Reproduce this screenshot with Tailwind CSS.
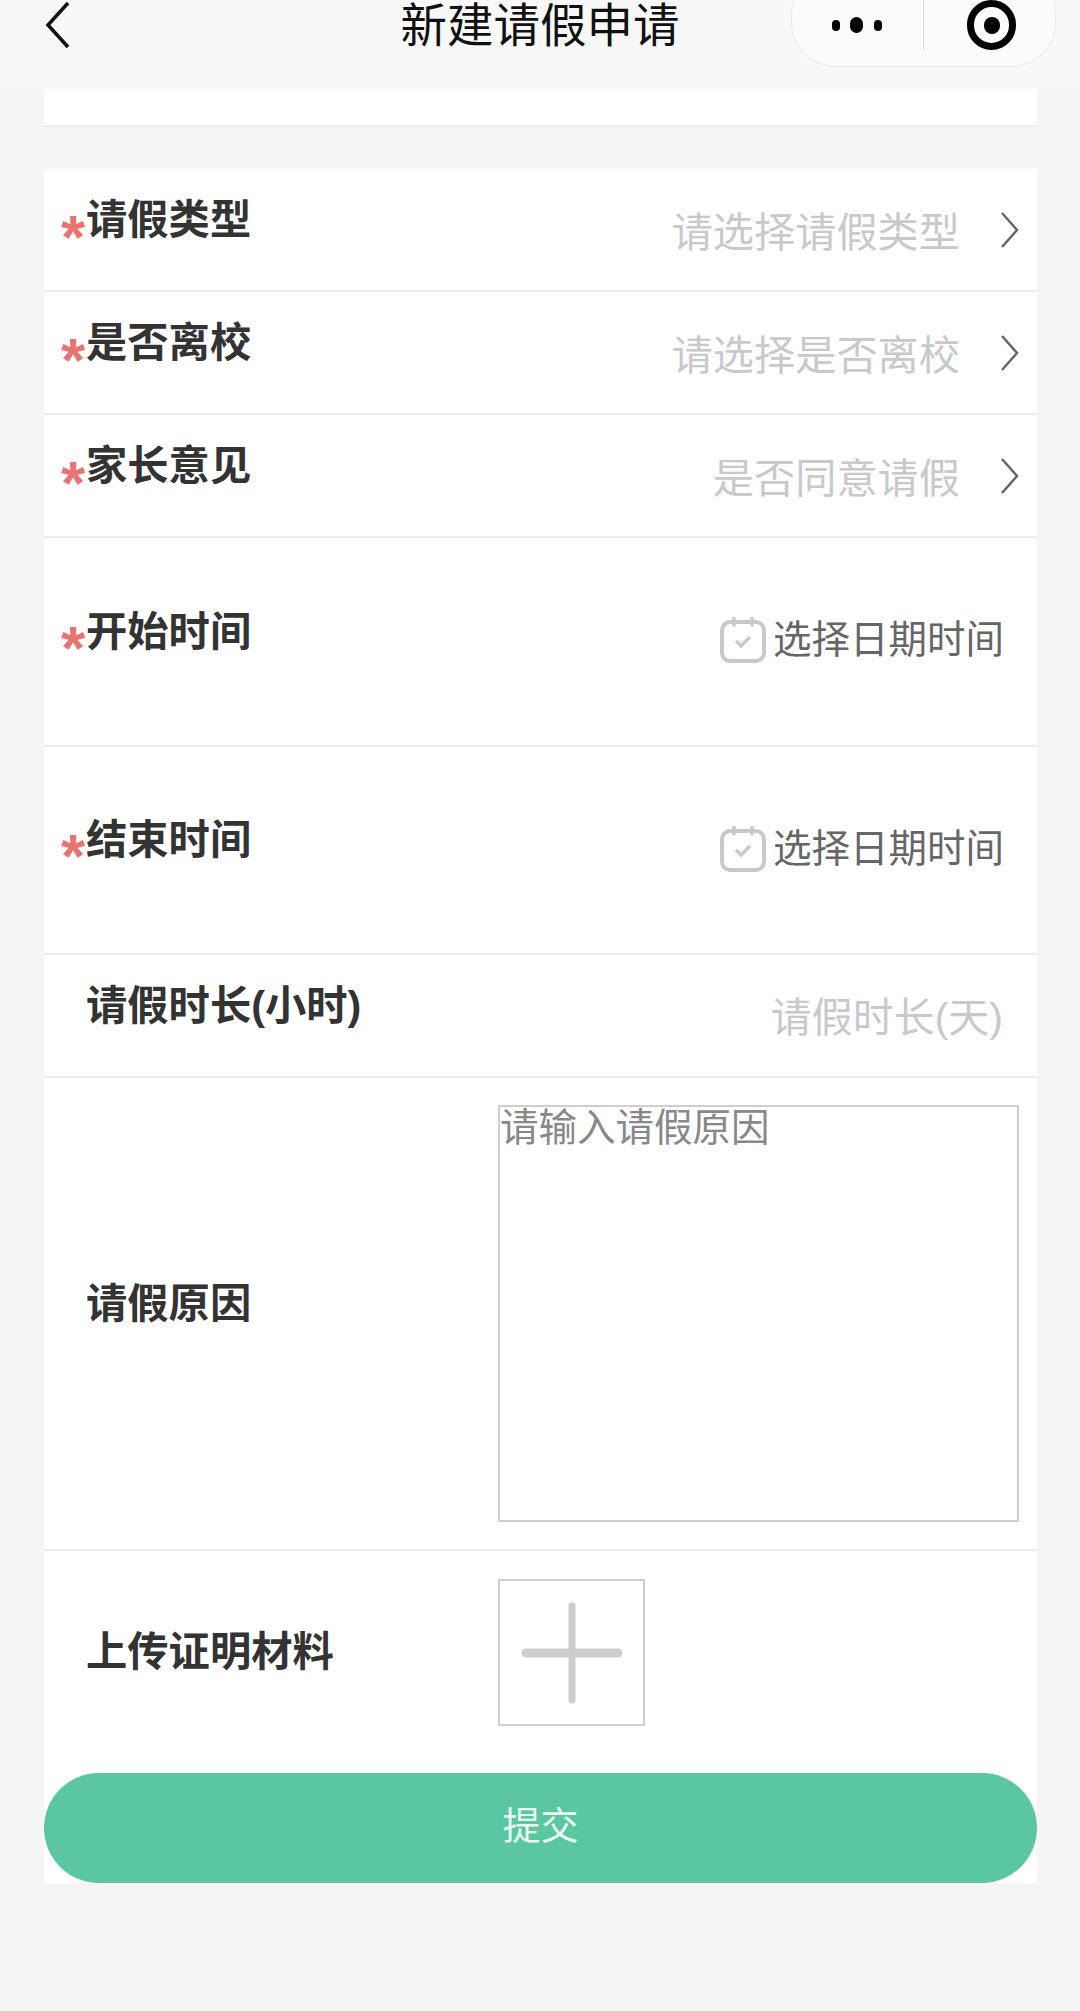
<!DOCTYPE html>
<html lang="zh">
<head>
<meta charset="utf-8">
<script src="https://cdn.jsdelivr.net/npm/@tailwindcss/browser@4"></script>
</head>
<body class="m-0 bg-[#f5f5f5] font-['Liberation_Sans','Noto_Sans_CJK_SC',sans-serif]">
<div class="w-[1080px] h-[2011px] overflow-hidden flex flex-col">
  <header class="relative h-[89px] shrink-0 bg-[#f8f8f8] flex items-start justify-center">
    <svg class="absolute left-[44px] top-[1px]" width="28" height="48" viewBox="0 0 28 48" fill="none"><path d="M24 2 L4 24 L24 46" stroke="#111" stroke-width="3.5"/></svg>
    <div class="text-[46.5px] leading-[50px] text-[#111] mt-[1px]">新建请假申请</div>
    <div class="absolute left-[791px] top-[-30px] w-[265px] h-[97px] rounded-[44px] border border-[#e9e9e9] bg-[#fbfbfb]">
      <span class="absolute left-[40px] top-[49px] w-[8px] h-[11px] rounded-full bg-black"></span>
      <span class="absolute left-[58px] top-[46px] w-[13px] h-[16px] rounded-full bg-black"></span>
      <span class="absolute left-[82px] top-[49px] w-[8px] h-[11px] rounded-full bg-black"></span>
      <span class="absolute left-[131px] top-[29px] w-px h-[50px] bg-[#dcdcdc]"></span>
      <span class="absolute left-[175px] top-[29px] w-[49px] h-[50px] rounded-full border-[7px] border-black flex items-center justify-center"><span class="w-[16px] h-[17px] rounded-full bg-black"></span></span>
    </div>
  </header>

  <div class="mx-[44px] w-[993px] h-[38px] bg-white border-b-2 border-[#ededed] shrink-0"></div>

  <main class="mt-[42px] ml-[44px] w-[993px] bg-white flex flex-col shrink-0">
    <div class="h-[123px] border-b-2 border-[#ededed] flex items-start justify-between">
      <div class="flex items-start ml-[17px] mt-[28px]">
        <span class="text-[#ea7272] text-[62px] leading-[62px] font-bold w-[25px] mt-[9px]">*</span>
        <span class="text-[41.3px] leading-[46px] font-bold text-[#333]">请假类型</span>
      </div>
      <div class="flex items-center mt-[41px] mr-[17px]">
        <span class="text-[41.2px] leading-[46px] text-[#c8c9cc]">请选择请假类型</span>
        <svg class="ml-[40px] mt-[-6px]" width="20" height="36" viewBox="0 0 20 36" fill="none"><path d="M2 1 L17 18 L2 35" stroke="#666" stroke-width="2.5"/></svg>
      </div>
    </div>
    <div class="h-[123px] border-b-2 border-[#ededed] flex items-start justify-between">
      <div class="flex items-start ml-[17px] mt-[28px]">
        <span class="text-[#ea7272] text-[62px] leading-[62px] font-bold w-[25px] mt-[9px]">*</span>
        <span class="text-[41.3px] leading-[46px] font-bold text-[#333]">是否离校</span>
      </div>
      <div class="flex items-center mt-[41px] mr-[17px]">
        <span class="text-[41.2px] leading-[46px] text-[#c8c9cc]">请选择是否离校</span>
        <svg class="ml-[40px] mt-[-6px]" width="20" height="36" viewBox="0 0 20 36" fill="none"><path d="M2 1 L17 18 L2 35" stroke="#666" stroke-width="2.5"/></svg>
      </div>
    </div>
    <div class="h-[123px] border-b-2 border-[#ededed] flex items-start justify-between">
      <div class="flex items-start ml-[17px] mt-[28px]">
        <span class="text-[#ea7272] text-[62px] leading-[62px] font-bold w-[25px] mt-[9px]">*</span>
        <span class="text-[41.3px] leading-[46px] font-bold text-[#333]">家长意见</span>
      </div>
      <div class="flex items-center mt-[41px] mr-[17px]">
        <span class="text-[41.2px] leading-[46px] text-[#c8c9cc]">是否同意请假</span>
        <svg class="ml-[40px] mt-[-6px]" width="20" height="36" viewBox="0 0 20 36" fill="none"><path d="M2 1 L17 18 L2 35" stroke="#666" stroke-width="2.5"/></svg>
      </div>
    </div>
    <div class="h-[209px] border-b-2 border-[#ededed] flex items-start justify-between">
      <div class="flex items-start ml-[17px] mt-[71px]">
        <span class="text-[#ea7272] text-[62px] leading-[62px] font-bold w-[25px] mt-[8px]">*</span>
        <span class="text-[41.3px] leading-[46px] font-bold text-[#333]">开始时间</span>
      </div>
      <div class="flex items-center mt-[78px] mr-[33px]">
        <svg width="46" height="46" viewBox="0 0 46 46" fill="none" class="mr-[7px] mt-[1px]"><rect x="2" y="5" width="42" height="39" rx="8" stroke="#c8c9cc" stroke-width="4"/><path d="M14 1 V8 M32 1 V8" stroke="#c8c9cc" stroke-width="3.5" stroke-linecap="round"/><path d="M16 24 L21 29 L30 20" stroke="#c8c9cc" stroke-width="3.5"/></svg>
        <span class="text-[38.5px] leading-[46px] text-[#666]">选择日期时间</span>
      </div>
    </div>
    <div class="h-[208px] border-b-2 border-[#ededed] flex items-start justify-between">
      <div class="flex items-start ml-[17px] mt-[70px]">
        <span class="text-[#ea7272] text-[62px] leading-[62px] font-bold w-[25px] mt-[8px]">*</span>
        <span class="text-[41.3px] leading-[46px] font-bold text-[#333]">结束时间</span>
      </div>
      <div class="flex items-center mt-[78px] mr-[33px]">
        <svg width="46" height="46" viewBox="0 0 46 46" fill="none" class="mr-[7px] mt-[1px]"><rect x="2" y="5" width="42" height="39" rx="8" stroke="#c8c9cc" stroke-width="4"/><path d="M14 1 V8 M32 1 V8" stroke="#c8c9cc" stroke-width="3.5" stroke-linecap="round"/><path d="M16 24 L21 29 L30 20" stroke="#c8c9cc" stroke-width="3.5"/></svg>
        <span class="text-[38.5px] leading-[46px] text-[#666]">选择日期时间</span>
      </div>
    </div>
    <div class="h-[123px] border-b-2 border-[#ededed] flex items-start justify-between">
      <span class="ml-[42px] mt-[28px] text-[41.3px] leading-[46px] font-bold text-[#333]">请假时长(小时)</span>
      <span class="mr-[34px] mt-[40px] text-[41px] leading-[46px] text-[#c8c9cc]">请假时长(天)</span>
    </div>
    <div class="h-[473px] border-b-2 border-[#ededed] flex items-center">
      <span class="ml-[42px] w-[412px] text-[41.3px] leading-[46px] font-bold text-[#333] mt-[-19px]">请假原因</span>
      <div class="w-[521px] h-[417px] border-2 border-[#cfcfcf] text-[38.5px] leading-[42px] text-[#888] mt-[-1px]">请输入请假原因</div>
    </div>
    <div class="h-[222px] flex items-start">
      <span class="ml-[42px] w-[412px] mt-[78px] text-[41.3px] leading-[46px] font-bold text-[#333]">上传证明材料</span>
      <div class="mt-[28px] w-[147px] h-[147px] border-2 border-[#cfcfcf] flex items-center justify-center">
        <svg width="102" height="102" viewBox="0 0 102 102" fill="none"><path d="M51 4 V98" stroke="#cdcdcd" stroke-width="7" stroke-linecap="round"/><path d="M5 51 H97" stroke="#cdcdcd" stroke-width="9" stroke-linecap="round"/></svg>
      </div>
    </div>
    <button class="h-[110px] w-full rounded-full bg-[#5ac7a1] text-[38px] text-[#ecfaf4] flex items-center justify-center pb-[4px]">提交</button>
  </main>
</div>
</body>
</html>
